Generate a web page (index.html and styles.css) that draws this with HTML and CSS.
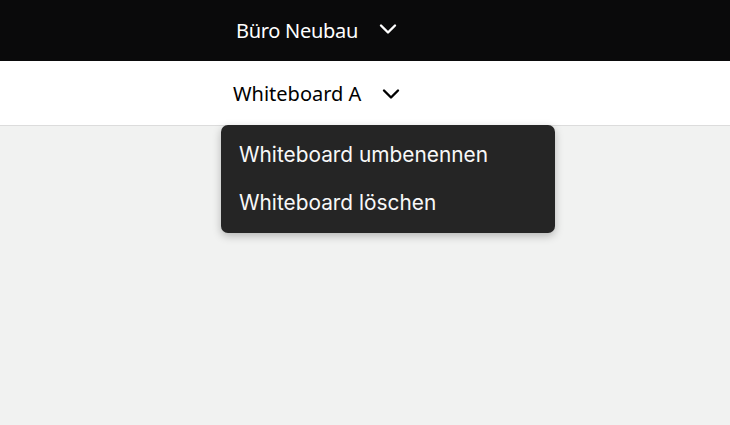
FILE: index.html
```html
<!DOCTYPE html>
<html>
<head>
<meta charset="utf-8">
<link rel="stylesheet" href="styles.css">
</head>
<body>
<div class="topbar">
  <div class="title">Büro Neubau</div>
  <svg class="chev" width="18" height="12" viewBox="0 0 18 12"><path d="M2 2.5 L9 9.5 L16 2.5" fill="none" stroke="#fff" stroke-width="2.4" stroke-linecap="round" stroke-linejoin="round"/></svg>
</div>
<div class="subbar">
  <div class="board">Whiteboard A</div>
  <svg class="chev2" width="18" height="12" viewBox="0 0 18 12"><path d="M2 2.5 L9 9.5 L16 2.5" fill="none" stroke="#000" stroke-width="2.4" stroke-linecap="round" stroke-linejoin="round"/></svg>
</div>
<div class="canvas">
  <div class="menu">
    <div class="item">Whiteboard umbenennen</div>
    <div class="item">Whiteboard löschen</div>
  </div>
</div>
</body>
</html>
```
FILE: styles.css
```css
html, body { margin: 0; padding: 0; }
body { width: 730px; height: 425px; background: #f1f2f1; overflow: hidden; font-family: "Noto Sans", sans-serif; }
.topbar { height: 61px; background: #0a0a0b; display: flex; align-items: center; padding-left: 236px; box-sizing: border-box; }
.title { color: #fff; font-size: 20px; letter-spacing: -0.3px; }
.chev { margin-left: 21px; margin-top: -3px; }
.subbar { height: 65px; background: #fff; border-bottom: 1px solid #dcdcdc; display: flex; align-items: center; padding-left: 233px; box-sizing: border-box; }
.board { color: #000; font-size: 20px; letter-spacing: 0px; }
.chev2 { margin-left: 21px; margin-top: 2px; }
.canvas { position: relative; }
.menu { position: absolute; left: 221px; top: -1px; width: 334px; height: 108px; background: #252525; border-radius: 7px; box-shadow: 0 3px 8px rgba(0,0,0,0.25); box-sizing: border-box; padding-top: 12px; }
.item { font-family: Inter, sans-serif; color: #f8f8f8; font-size: 20.85px; padding-left: 18px; height: 48px; line-height: 36px; }
```
